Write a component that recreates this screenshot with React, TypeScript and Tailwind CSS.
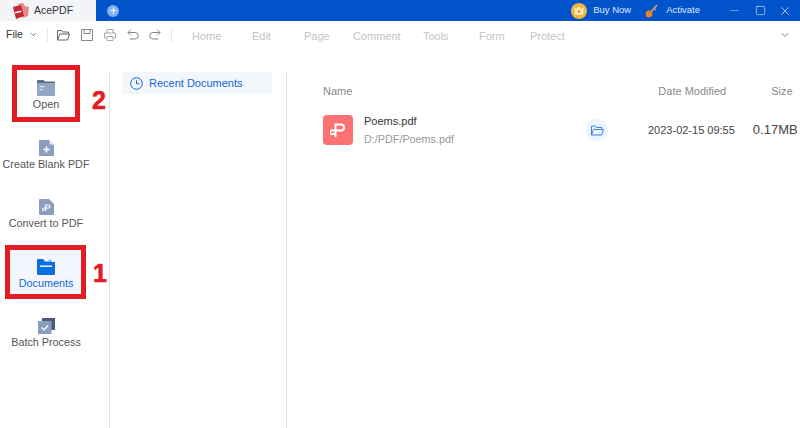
import React from 'react';
import { ChevronDown, Minus, Square, X, Plus } from 'lucide-react';

const menus: [string, string][] = [
  ['Home', 'w-[60px]'],
  ['Edit', 'w-[52px]'],
  ['Page', 'w-[49px]'],
  ['Comment', 'w-[70px]'],
  ['Tools', 'w-[56px]'],
  ['Form', 'w-[51px]'],
  ['Protect', 'w-[64px]'],
];

const FolderIcon = () => (
  <svg width="18" height="16" viewBox="0 0 18 16">
    <path d="M0 1C0 .4.4 0 1 0h5.500L8 1.500h9a1 1 0 0 1 1 1V4H0z" fill="#5f7086" />
    <rect x="0" y="3" width="18" height="13" rx="1" fill="#93a6c4" />
    <rect x="2.500" y="6" width="5" height="1.200" fill="#dfe6f0" />
    <rect x="2.500" y="9" width="3.500" height="1.200" fill="#dfe6f0" />
  </svg>
);

const BlankIcon = () => (
  <svg width="15" height="16" viewBox="0 0 15 16">
    <path d="M1 0h9l5 5v10a1 1 0 0 1-1 1H1a1 1 0 0 1-1-1V1a1 1 0 0 1 1-1z" fill="#8a9fc0" />
    <path d="M10.500 0l4.500 4.500h-4.500z" fill="#dfe6f0" />
    <path d="M7.500 6.500v6M4.500 9.500h6" stroke="#fff" strokeWidth="1.500" />
  </svg>
);

const ConvertIcon = () => (
  <svg width="15" height="16" viewBox="0 0 15 16">
    <path d="M1 0h9l5 5v10a1 1 0 0 1-1 1H1a1 1 0 0 1-1-1V1a1 1 0 0 1 1-1z" fill="#8a9fc0" />
    <path d="M5.500 11.500H5a1.200 1.200 0 0 1 0-2.500h4.500a1.500 1.500 0 0 0 0-3H6.700v6" stroke="#fff" strokeWidth="1.200" fill="none" />
  </svg>
);

const DocsIcon = () => (
  <svg width="18" height="16" viewBox="0 0 18 16">
    <path d="M0 1C0 .4.4 0 1 0h5l2 2.500L18 3v2H0z" fill="#0b6fe0" />
    <path d="M9 3l4.500-3L15 3z" fill="#7db1ee" />
    <rect x="0" y="3" width="18" height="13" rx="1" fill="#0b6fe0" />
    <rect x="3" y="6.500" width="12" height="1.400" fill="#fff" />
  </svg>
);

const BatchIcon = () => (
  <svg width="17" height="16" viewBox="0 0 17 16">
    <rect x="4" y="0" width="13" height="12" fill="#4d5c72" />
    <rect x="0" y="3" width="13.500" height="13" fill="#8a9fc0" />
    <path d="M3.500 9.500l2.500 2.500 4-4.500" stroke="#fff" strokeWidth="1.200" fill="none" />
  </svg>
);

const sideItems = [
  { label: 'Open', icon: <FolderIcon /> },
  { label: 'Create Blank PDF', icon: <BlankIcon /> },
  { label: 'Convert to PDF', icon: <ConvertIcon /> },
  { label: 'Documents', icon: <DocsIcon />, active: true },
  { label: 'Batch Process', icon: <BatchIcon /> },
];

export default function App() {
  return (
    <div className="relative w-[800px] h-[428px] overflow-hidden bg-white font-['Liberation_Sans',sans-serif] text-[10.800px] text-[#555]">
      {/* the Documents frame sits under the sidebar item so its tint shows behind the label */}
      <div className="absolute left-[5px] top-[245px] w-[81px] h-[54px] border-[5px] border-[#e31b23] bg-[#f3f6fc]" />

      {/* title bar */}
      <div className="flex items-center h-[21px] bg-[#0053c9]">
        <div className="flex items-center w-[96px] h-full bg-[#f2f4f8] pl-[12px] gap-[4px]">
          <svg width="18" height="16" viewBox="0 0 18 16">
            <path d="M6 1l5-1 2 3 4 1-1 9-5 2z" fill="#e58a8a" />
            <path d="M1 4l8-2 3 11-8 3z" fill="#c8262c" />
            <path d="M3 9l6-1.500.4 1.500-6 1.500z" fill="#fff" />
          </svg>
          <span className="text-[#333] text-[10.500px]">AcePDF</span>
        </div>
        <div className="ml-[11px] w-[12px] h-[12px] rounded-full bg-[#7fb0f2] flex items-center justify-center">
          <Plus size={9} strokeWidth={3} className="text-white" />
        </div>
        <div className="ml-auto flex items-center h-full">
          <div className="w-[16px] h-[16px] rounded-full bg-[#f2b441] flex items-center justify-center">
            <svg width="10" height="9" viewBox="0 0 10 9">
              <path d="M0 1l2.500 2L5 0l2.500 3L10 1 9 9H1z" fill="#ffe9a8" />
              <circle cx="5" cy="5.500" r="1" fill="#e0452c" />
            </svg>
          </div>
          <span className="ml-[6px] text-[#dfeaff] text-[9.500px]">Buy Now</span>
          <svg className="ml-[14px]" width="14" height="14" viewBox="0 0 14 14">
            <path d="M5 9l7-8" stroke="#c8a06a" strokeWidth="1.600" />
            <path d="M9 4.500l2 1.500" stroke="#c8a06a" strokeWidth="1.300" />
            <circle cx="4" cy="10" r="3.400" fill="#e8832a" />
          </svg>
          <span className="ml-[7px] text-[#dfeaff] text-[9.500px]">Activate</span>
          <Minus size={13} strokeWidth={1} className="ml-[28px] text-[#c6dafa]" />
          <Square size={11} strokeWidth={1.200} className="ml-[14px] text-white" />
          <X size={14} strokeWidth={1.200} className="ml-[12px] mr-[8px] text-[#dfeaff]" />
        </div>
      </div>

      {/* toolbar */}
      <div className="flex items-center h-[27px]">
        <span className="ml-[6px] text-[#333] text-[10.500px]">File</span>
        <ChevronDown size={9} className="ml-[6px] text-[#444]" />
        <div className="ml-[9px] w-px h-[14px] bg-[#e6e6e6]" />
        <svg className="ml-[9px]" width="13" height="12" viewBox="0 0 13 12" fill="none" stroke="#666">
          <path d="M.5 11V1.500h4l1 1.500h6v2M.5 11h10l2-6H3L.5 11z" />
        </svg>
        <svg className="ml-[11px]" width="12" height="12" viewBox="0 0 12 12" fill="none" stroke="#888">
          <path d="M.5.5h11v11H.5zM3 .5v4h6v-4" />
        </svg>
        <svg className="ml-[11px]" width="12" height="12" viewBox="0 0 12 12" fill="none" stroke="#a8a8a8">
          <path d="M3 4V.5h6V4M2.500 9H.5V4h11v5h-2M3 7.500h6v4H3z" />
        </svg>
        <svg className="ml-[11px]" width="12" height="12" viewBox="0 0 12 12" fill="none" stroke="#888">
          <path d="M4 .5L1 3.500l3 3M1 3.500h7a3.200 3.200 0 0 1 0 6.500H3" />
        </svg>
        <svg className="ml-[10px]" width="12" height="12" viewBox="0 0 12 12" fill="none" stroke="#888">
          <path d="M8 .5l3 3-3 3M11 3.500H4a3.200 3.200 0 0 0 0 6.500h5" />
        </svg>
        <div className="ml-[10px] w-px h-[14px] bg-[#e6e6e6]" />
        <div className="ml-[20px] mt-[3px] flex text-[11px] text-[#c4c4c4]">
          {menus.map(([m, w]) => (
            <span key={m} className={w}>{m}</span>
          ))}
        </div>
        <ChevronDown size={12} strokeWidth={1.500} className="ml-auto mr-[9px] text-[#555]" />
      </div>

      {/* body */}
      <div className="relative flex mt-[24px] h-[356px]">
        <div className="w-[110px] border-r border-[#e4e4e4] pr-[17px] flex flex-col items-stretch">
          {sideItems.map((s) => (
            <div
              key={s.label}
              className={`flex flex-col items-center h-[59.500px] pt-[8px] whitespace-nowrap ${s.active ? 'text-[#1067d8]' : 'text-[#555]'}`}
            >
              <div className="h-[16px] flex items-center">{s.icon}</div>
              <span className="mt-[1px] leading-[14px]">{s.label}</span>
            </div>
          ))}
        </div>

        <div className="w-[177px] border-r border-[#e4e4e4] pl-[12px] pr-[14px]">
          <div className="flex items-center h-[22px] bg-[#f3f6fb] pl-[8px] pt-[1px] text-[11px] text-[#1067d8]">
            <svg width="13" height="13" viewBox="0 0 13 13" fill="none" stroke="#1067d8">
              <circle cx="6.500" cy="6.500" r="5.800" />
              <path d="M6.500 3.200v3.500h3" />
            </svg>
            <span className="ml-[6px]">Recent Documents</span>
          </div>
        </div>

        <div className="flex-1 pl-[36px]">
          <div className="flex items-center h-[14px] mt-[12px] text-[11px] text-[#888]">
            <span>Name</span>
            <span className="ml-[306px]">Date Modified</span>
            <span className="ml-[45px]">Size</span>
          </div>
          <div className="flex mt-[16px] h-[32px] items-center">
            <div className="w-[30px] h-[30px] rounded-[4px] bg-[#fc7272] flex items-center justify-center">
              <svg width="16" height="15" viewBox="0 0 16 15" fill="none" stroke="#fff" strokeWidth="2">
                <path d="M5 11H3a2 2 0 1 1 0-3.500h8a3 3 0 0 0 0-6H5.500V14" />
              </svg>
            </div>
            <div className="ml-[11px] w-[222px]">
              <div className="text-[11px] text-[#333] leading-[14px]">Poems.pdf</div>
              <div className="mt-[4px] text-[#999] leading-[14px]">D:/PDF/Poems.pdf</div>
            </div>
            <div className="w-[22px] h-[22px] rounded-full bg-[#edf4fd] flex items-center justify-center">
              <svg width="13" height="11" viewBox="0 0 13 11" fill="none" stroke="#3b82e0">
                <path d="M.5 10V1h4l1 1.500h5.500v2M.5 10h10l2-5.500H2.500L.5 10z" />
              </svg>
            </div>
            <span className="ml-[40px] text-[11px] text-[#444]">2023-02-15 09:55</span>
            <span className="ml-[18px] text-[13px] text-[#444]">0.17MB</span>
          </div>
        </div>
      </div>

      {/* red annotations */}
      <div className="absolute left-[12px] top-[65px] w-[68px] h-[57px] border-[5px] border-[#e31b23]" />
      <span className="absolute left-[92px] top-[86px] text-[25px] leading-[28px] font-bold text-[#e31b23] [-webkit-text-stroke:0.6px_#e31b23]">2</span>
      <span className="absolute left-[93px] top-[259px] text-[25px] leading-[28px] font-bold text-[#e31b23] [-webkit-text-stroke:0.6px_#e31b23]">1</span>
    </div>
  );
}
